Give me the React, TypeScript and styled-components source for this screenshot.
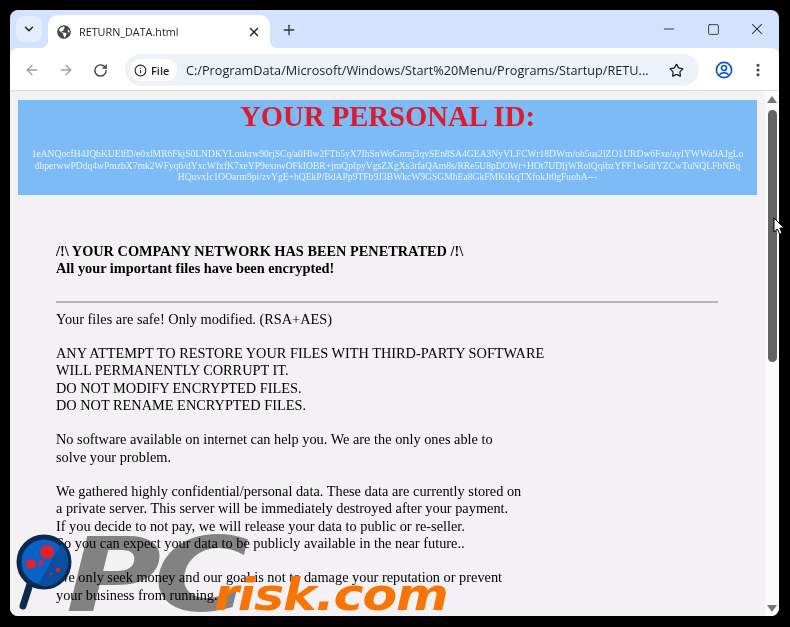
import React from "react";
import styled, { createGlobalStyle } from "styled-components";
import { ArrowLeft, ArrowRight, ChevronDown, EllipsisVertical, Info, Minus, Plus, RotateCw, Square, Star, X } from "lucide-react";
import { FaGlobeAmericas } from "react-icons/fa";

const GlobalStyle = createGlobalStyle`
    html, body {
        margin: 0;
        padding: 0;
        background: #000;
        overflow: hidden;
    }
`;

const Screen = styled.div`
    position: relative;
    width: 790px;
    height: 627px;
    box-sizing: border-box;
    padding: 10px 11px 11px 10px;
    background: #000;
`;

const Window = styled.div`
    position: relative;
    height: 100%;
    display: flex;
    flex-direction: column;
    border-radius: 8px;
    overflow: hidden;
    background: #d3e3fd;
`;

const TabStrip = styled.div`
    height: 38px;
    flex: none;
    display: flex;
    align-items: flex-end;
    color: #1f1f1f;
`;

const TabSearch = styled.div`
    width: 26px;
    height: 26px;
    margin: 0 6px 6px 6px;
    display: flex;
    align-items: center;
    justify-content: center;
    border-radius: 8px;
    background: #e4edfc;
`;

const Tab = styled.div`
    position: relative;
    width: 222px;
    height: 33px;
    box-sizing: border-box;
    padding: 0 9px;
    display: flex;
    align-items: center;
    border-radius: 10px 10px 0 0;
    background: #fff;
    font: 10.8px "Open Sans", sans-serif;

    &::before,
    &::after {
        content: "";
        position: absolute;
        bottom: 0;
        width: 8px;
        height: 8px;
    }

    &::before {
        left: -8px;
        background: radial-gradient(circle at 0 0, transparent 8px, #fff 8.5px);
    }

    &::after {
        right: -8px;
        background: radial-gradient(circle at 100% 0, transparent 8px, #fff 8.5px);
    }
`;

const TabTitle = styled.span`
    flex: 1;
    margin-left: 8px;
    white-space: nowrap;
`;

const NewTab = styled.div`
    margin: 0 0 10px 11px;
    display: flex;
`;

const WindowControls = styled.div`
    margin: 0 0 10px auto;
    display: flex;
    align-items: center;
`;

const ControlCell = styled.div`
    width: 44px;
    display: flex;
    justify-content: center;
`;

const Toolbar = styled.div`
    height: 43px;
    flex: none;
    box-sizing: border-box;
    padding: 2px 14px 0 14px;
    display: flex;
    align-items: center;
    border-radius: 8px 8px 0 0;
    background: #fff;
    border-bottom: 1px solid #dcdcdc;
`;

const NavButton = styled.div<{ $dim?: boolean }>`
    width: 16px;
    flex: none;
    margin-right: 18px;
    display: flex;
    justify-content: center;
    color: ${(p) => (p.$dim ? "#9a9da1" : "#3c4043")};
`;

const Omnibox = styled.div`
    width: 574px;
    height: 32px;
    flex: none;
    margin-left: -1px;
    box-sizing: border-box;
    padding: 0 15px 0 5px;
    display: flex;
    align-items: center;
    border-radius: 16px;
    background: #edf2fa;
    font-family: "Open Sans", sans-serif;
    color: #1f1f1f;
`;

const FileChip = styled.div`
    width: 47px;
    height: 22px;
    flex: none;
    box-sizing: border-box;
    padding-left: 4px;
    display: flex;
    align-items: center;
    gap: 4px;
    border-radius: 11px;
    background: #fff;
    font-size: 11px;
    font-weight: 600;
`;

const Url = styled.span`
    flex: 1;
    min-width: 0;
    margin-left: 9px;
    font-size: 12.7px;
    white-space: nowrap;
`;

const Account = styled.svg`
    flex: none;
    margin-left: 16px;
`;

const MenuButton = styled.div`
    flex: none;
    margin-left: 17px;
    display: flex;
    color: #3c4043;
`;

const Body = styled.div`
    flex: 1;
    min-height: 0;
    display: flex;
`;

const Page = styled.div`
    flex: 1;
    min-width: 0;
    overflow: hidden;
    background: #f3f1f3;
    font-family: "Liberation Serif", serif;
    color: #000;
`;

const Banner = styled.div`
    height: 95px;
    margin: 9px 8px 0 8px;
    background: #7dbbf7;
    text-align: center;
`;

const BannerTitle = styled.h1`
    margin: 0;
    font-size: 28.7px;
    line-height: 33px;
    font-weight: bold;
    color: #dc1c2a;
`;

const PersonalId = styled.p`
    margin: 15px 0 0 0;
    font-size: 9.6px;
    line-height: 11.5px;
    color: #eaf3fd;
    white-space: nowrap;
`;

const Note = styled.div`
    padding: 48px 47px 0 46px;
    font-size: 14.33px;
    line-height: 17.25px;
    white-space: nowrap;
`;

const Headline = styled.div`
    font-weight: bold;
`;

const Rule = styled.hr`
    margin: 23px 0 8px 0;
    border: none;
    border-top: 2px solid #b4b4b4;
`;

const Para = styled.p`
    margin: 0 0 17.25px 0;
`;

const Scrollbar = styled.div`
    width: 14px;
    flex: none;
    display: flex;
    flex-direction: column;
    align-items: center;
    padding: 5px 0 4px 0;
    box-sizing: border-box;
    background: #fafafa;
`;

const Arrow = styled.div<{ $down?: boolean }>`
    flex: none;
    width: 0;
    height: 0;
    border-left: 5px solid transparent;
    border-right: 5px solid transparent;
    ${(p) => (p.$down ? "border-top: 7px solid #757575;" : "border-bottom: 7px solid #757575;")}
`;

const Thumb = styled.div`
    width: 9px;
    height: 252px;
    margin-top: 7px;
    flex: none;
    border-radius: 4.5px;
    background: #636363;
`;

const Track = styled.div`
    flex: 1;
`;

const Pointer = styled.svg`
    position: absolute;
    left: 773px;
    top: 217px;
`;

const Magnifier = styled.svg`
    position: absolute;
    left: 4px;
    top: 522px;
`;

const LogoPc = styled.span`
    position: absolute;
    left: 56px;
    top: 513px;
    font: italic bold 104px/1 "DejaVu Sans", sans-serif;
    letter-spacing: -6px;
    color: #8a8a8a;
    mix-blend-mode: multiply;
    transform: scaleX(1.25);
    transform-origin: left top;
`;

const LogoRisk = styled.span`
    position: absolute;
    left: 204px;
    top: 563px;
    font: italic bold 44px/1 "DejaVu Sans", sans-serif;
    letter-spacing: -1px;
    color: #f97406;
    transform: scaleX(1.15);
    transform-origin: left top;
`;

const App: React.FC = () => {
    return (
        <Screen>
            <GlobalStyle />
            <Window>
                <TabStrip>
                    <TabSearch><ChevronDown size={14} strokeWidth={2.6} /></TabSearch>
                    <Tab>
                        <FaGlobeAmericas size={14} color="#45474a" />
                        <TabTitle>RETURN_DATA.html</TabTitle>
                        <X size={14} strokeWidth={2.4} />
                    </Tab>
                    <NewTab><Plus size={16} strokeWidth={2} color="#333" /></NewTab>
                    <WindowControls>
                        <ControlCell><Minus size={16} strokeWidth={1.3} /></ControlCell>
                        <ControlCell><Square size={13} strokeWidth={1.5} /></ControlCell>
                        <ControlCell><X size={18} strokeWidth={1.4} /></ControlCell>
                    </WindowControls>
                </TabStrip>

                <Toolbar>
                    <NavButton $dim><ArrowLeft size={16} /></NavButton>
                    <NavButton $dim><ArrowRight size={16} /></NavButton>
                    <NavButton><RotateCw size={15} strokeWidth={2.2} /></NavButton>
                    <Omnibox>
                        <FileChip><Info size={13} strokeWidth={2} />File</FileChip>
                        <Url>C:/ProgramData/Microsoft/Windows/Start%20Menu/Programs/Startup/RETU...</Url>
                        <Star size={15} strokeWidth={2} />
                    </Omnibox>
                    <Account width="18" height="18" viewBox="0 0 18 18" fill="none" stroke="#0b57d0" strokeWidth="1.7">
                        <circle cx="9" cy="9" r="7.6" />
                        <circle cx="9" cy="7" r="2.5" />
                        <path d="M4.4 13.8c1.3-1.6 2.8-2.2 4.6-2.2s3.3.6 4.6 2.2" />
                    </Account>
                    <MenuButton><EllipsisVertical size={16} strokeWidth={2.6} /></MenuButton>
                </Toolbar>

                <Body>
                    <Page>
                        <Banner>
                            <BannerTitle>YOUR PERSONAL ID:</BannerTitle>
                            <PersonalId>
                                1eANQocfH4JQbKUElfD/e0xlMR6FkjS0LNDKYLonkrw90rjSCq/a0Hlw2FTb5yX7IhSnWoGnmj3qvSEn8SA4GEA3NyVLFCWr18DWm/oh5us2lZO1URDw6Fxe/aylYWWa9AJgLo<br />
                                dhperwwPDdq4wPmzbX7mk2WFyq6/dYxcWfxfK7xeYP9exnwOFkIOBR+jmQpIpyVgsZXgXs3rfaQAm8s/RRe5U8pDOWr+HOt7UDIjWRolQqibzYFF1w5diYZCwTuNQLFbNBq<br />
                                HQuvxIc1OOarm9pi/zvYgE+hQEkP/BdAPp9TFb9J3BWkcW9GSGMhEa8GkFMKtKqTXfokJt0gFuohA---
                            </PersonalId>
                        </Banner>
                        <Note>
                            <Headline>
                                /!\ YOUR COMPANY NETWORK HAS BEEN PENETRATED /!\<br />
                                All your important files have been encrypted!
                            </Headline>
                            <Rule />
                            <Para>Your files are safe! Only modified. (RSA+AES)</Para>
                            <Para>
                                ANY ATTEMPT TO RESTORE YOUR FILES WITH THIRD-PARTY SOFTWARE<br />
                                WILL PERMANENTLY CORRUPT IT.<br />
                                DO NOT MODIFY ENCRYPTED FILES.<br />
                                DO NOT RENAME ENCRYPTED FILES.
                            </Para>
                            <Para>
                                No software available on internet can help you. We are the only ones able to<br />
                                solve your problem.
                            </Para>
                            <Para>
                                We gathered highly confidential/personal data. These data are currently stored on<br />
                                a private server. This server will be immediately destroyed after your payment.<br />
                                If you decide to not pay, we will release your data to public or re-seller.<br />
                                So you can expect your data to be publicly available in the near future..
                            </Para>
                            <Para>
                                We only seek money and our goal is not to damage your reputation or prevent<br />
                                your business from running.
                            </Para>
                        </Note>
                    </Page>
                    <Scrollbar>
                        <Arrow />
                        <Thumb />
                        <Track />
                        <Arrow $down />
                    </Scrollbar>
                </Body>

                <LogoPc>PC</LogoPc>
                <LogoRisk>risk.com</LogoRisk>
                <Magnifier width="60" height="82" viewBox="0 0 60 82">
                    <path d="M16 52 L9 74" stroke="#0c2a4e" strokeWidth="7" strokeLinecap="round" />
                    <circle cx="30" cy="30" r="25" fill="#0a62c9" stroke="#0c2a4e" strokeWidth="5" />
                    <path d="M47 12a25 25 0 0 1-17 42.500l-6-2z" fill="#0b4f9e" />
                    <circle cx="33" cy="20" r="7" fill="#e2202c" />
                    <circle cx="17" cy="32" r="5" fill="#e2202c" />
                    <circle cx="27" cy="31" r="2.5" fill="#e2202c" />
                    <circle cx="44" cy="38" r="2.2" fill="#e2202c" />
                    <circle cx="37" cy="42" r="1.2" fill="#e2202c" />
                </Magnifier>
            </Window>
            <Pointer width="12" height="19" viewBox="0 0 12 19">
                <path d="M1 1v14l3.400-3 2.200 5.200 2.400-1-2.200-5.200H11z" fill="#fff" stroke="#000" strokeWidth="1" />
            </Pointer>
        </Screen>
    );
};

export default App;
